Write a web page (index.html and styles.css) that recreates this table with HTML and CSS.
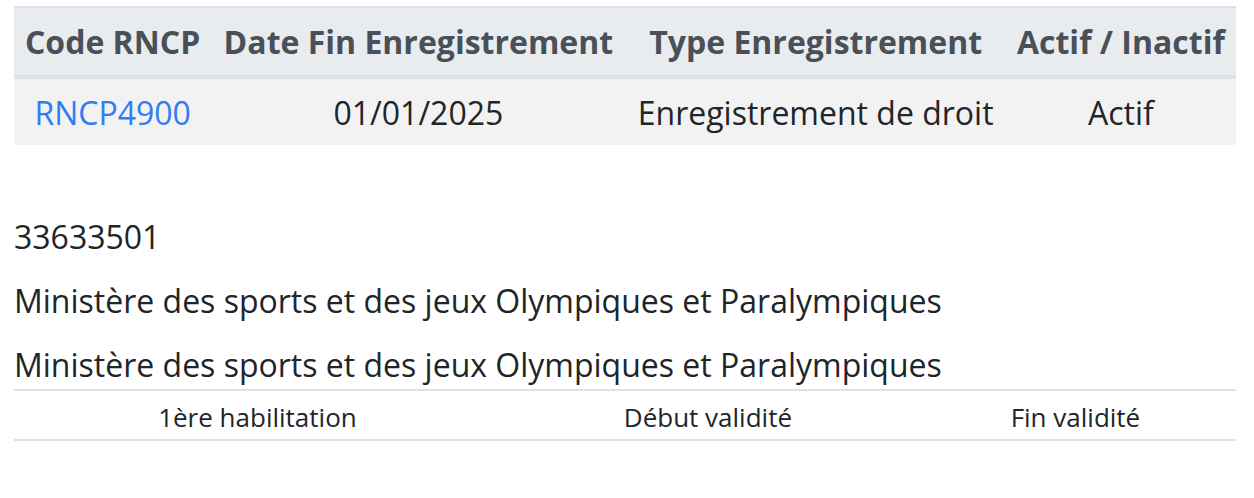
FILE: index.html
```html
<!DOCTYPE html>
<html lang="fr">
<head>
<meta charset="utf-8">
<title>RNCP</title>
<link rel="stylesheet" href="styles.css">
</head>
<body>
<div class="page">
  <table class="tbl tbl-main">
    <thead>
      <tr>
        <th>Code RNCP</th>
        <th>Date Fin Enregistrement</th>
        <th>Type Enregistrement</th>
        <th>Actif / Inactif</th>
      </tr>
    </thead>
    <tbody>
      <tr>
        <td><a class="link" href="#">RNCP4900</a></td>
        <td>01/01/2025</td>
        <td>Enregistrement de droit</td>
        <td>Actif</td>
      </tr>
    </tbody>
  </table>

  <p class="line">33633501</p>
  <p class="line">Ministère des sports et des jeux Olympiques et Paralympiques</p>
  <p class="line last">Ministère des sports et des jeux Olympiques et Paralympiques</p>

  <table class="tbl tbl-hab">
    <thead>
      <tr>
        <th>1ère habilitation</th>
        <th>Début validité</th>
        <th>Fin validité</th>
      </tr>
    </thead>
    <tbody></tbody>
  </table>
</div>
</body>
</html>
```

FILE: styles.css
```css
html, body {
  margin: 0;
  padding: 0;
  background: #ffffff;
}

body {
  font-family: "Open Sans", "Liberation Sans", sans-serif;
  font-size: 32px;
  line-height: 48px;
  color: #212529;
}

.page {
  padding: 6px 18px 0 14px;
}

.tbl {
  width: 100%;
  border-collapse: collapse;
  text-align: center;
}

.tbl-main {
  border-top: 2px solid #dee2e6;
  margin-bottom: 68px;
}

.tbl-main th {
  background: #e9ecef;
  color: #495057;
  font-weight: 700;
  padding: 9.6px 9.6px;
  border-bottom: 4px solid #dee2e6;
  white-space: nowrap;
}

.tbl-main td {
  background: #f2f2f2;
  padding: 9.6px 9.6px 8.6px;
  white-space: nowrap;
}

.link {
  color: #2f7cf6;
  text-decoration: none;
}

.line {
  margin: 0 0 16px;
}

.line.last {
  margin-bottom: 0;
}

.tbl-hab th {
  font-size: 26px;
  line-height: 38px;
  font-weight: 400;
  color: #212529;
  padding: 7px 2px 3px;
  border-top: 2px solid #dee2e6;
  border-bottom: 2px solid #dee2e6;
  white-space: nowrap;
}
```
